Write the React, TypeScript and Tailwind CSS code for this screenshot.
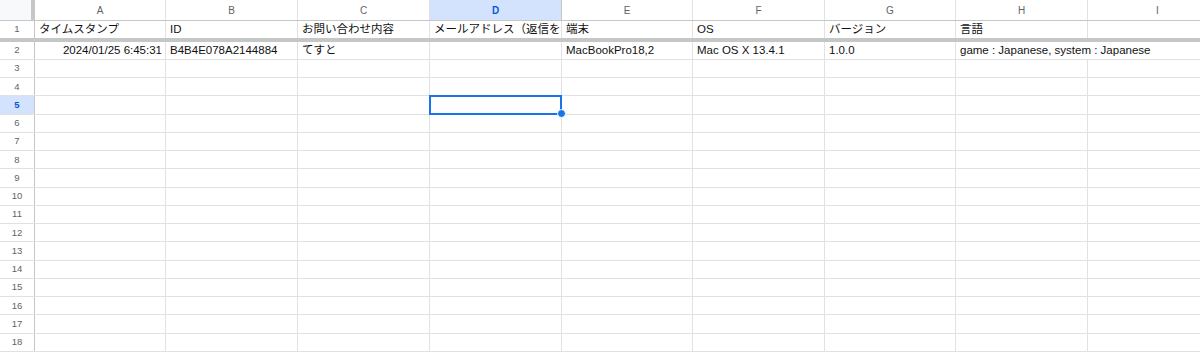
const columns = [
  { key: "A", width: 131 },
  { key: "B", width: 132 },
  { key: "C", width: 132 },
  { key: "D", width: 132 },
  { key: "E", width: 131 },
  { key: "F", width: 132 },
  { key: "G", width: 131 },
  { key: "H", width: 132 },
  { key: "I", width: 140 },
]

const headerRow: Record<string, string> = {
  A: "タイムスタンプ",
  B: "ID",
  C: "お問い合わせ内容",
  D: "メールアドレス（返信を希望される場合）",
  E: "端末",
  F: "OS",
  G: "バージョン",
  H: "言語",
}

const dataRow: Record<string, string> = {
  A: "2024/01/25 6:45:31",
  B: "B4B4E078A2144884",
  C: "てすと",
  E: "MacBookPro18,2",
  F: "Mac OS X 13.4.1",
  G: "1.0.0",
  H: "game : Japanese, system : Japanese",
}

const emptyRows = Array.from({ length: 16 }, (_, i) => i + 3)

const App = () => {
  return (
    <div
      className="w-[1200px] h-[354px] overflow-hidden bg-white text-[#111]"
      style={{ fontFamily: '"Liberation Sans", "Noto Sans CJK JP", Arial, sans-serif' }}
    >
      {/* column letters */}
      <div className="flex h-[21px] border-b border-[#c4c7c5]">
        <div className="flex w-[35px] shrink-0 bg-[#f8f9fa]">
          <div className="w-[31px]" />
          <div className="w-[4px] bg-[#c4c7c5]" />
        </div>
        {columns.map((col) => (
          <div
            key={col.key}
            style={{ width: col.width }}
            className={
              col.key === "D"
                ? "shrink-0 flex items-center justify-center border-r border-[#c4c7c5] bg-[#d3e3fd] text-[10px] font-bold text-[#0b57d0]"
                : "shrink-0 flex items-center justify-center border-r border-[#e1e1e1] text-[10px] text-[#5f6368]"
            }
          >
            {col.key}
          </div>
        ))}
      </div>

      {/* row 1 */}
      <div className="flex h-[16.5px]">
        <div className="w-[35px] shrink-0 flex items-center justify-center border-r border-[#c4c7c5] text-[9.5px] text-[#5f6368]">
          1
        </div>
        {columns.map((col) => (
          <div
            key={col.key}
            style={{ width: col.width }}
            className="shrink-0 flex items-center overflow-hidden whitespace-nowrap border-r border-[#e1e1e1] pl-[4px] pr-[1px] text-[11.5px]"
          >
            {headerRow[col.key]}
          </div>
        ))}
      </div>
      <div className="h-[4px] bg-[#c4c7c5]" />

      {/* row 2 */}
      <div className="flex h-[18.26px] border-b border-[#e1e1e1]">
        <div className="w-[35px] shrink-0 flex items-center justify-center border-r border-[#c4c7c5] text-[9.5px] text-[#5f6368]">
          2
        </div>
        {columns.map((col) => (
          <div
            key={col.key}
            style={{ width: col.width }}
            className={
              col.key === "H"
                ? "shrink-0 relative z-10 flex items-center whitespace-nowrap px-[4px] text-[11.5px]"
                : col.key === "A"
                  ? "shrink-0 flex items-center justify-end overflow-hidden whitespace-nowrap border-r border-[#e1e1e1] px-[3px] text-[11.5px]"
                  : "shrink-0 flex items-center overflow-hidden whitespace-nowrap border-r border-[#e1e1e1] px-[4px] text-[11.5px]"
            }
          >
            {dataRow[col.key]}
          </div>
        ))}
      </div>

      {emptyRows.map((row) => (
        <div key={row} className="flex h-[18.26px] border-b border-[#e1e1e1]">
          <div
            className={
              row === 5
                ? "w-[35px] shrink-0 flex items-center justify-center border-r border-[#c4c7c5] bg-[#d3e3fd] text-[9.5px] font-bold text-[#0b57d0]"
                : "w-[35px] shrink-0 flex items-center justify-center border-r border-[#c4c7c5] text-[9.5px] text-[#5f6368]"
            }
          >
            {row}
          </div>
          {columns.map((col) => (
            <div
              key={col.key}
              style={{ width: col.width }}
              className="shrink-0 relative border-r border-[#e1e1e1]"
            >
              {row === 5 && col.key === "D" && (
                <div className="absolute -top-[1px] -left-[1px] -right-[1px] -bottom-[1px] z-20 border-2 border-[#1a73e8]">
                  <div className="absolute -right-[5.5px] -bottom-[5.5px] h-[9px] w-[9px] rounded-full border border-white bg-[#1a73e8]" />
                </div>
              )}
            </div>
          ))}
        </div>
      ))}
    </div>
  )
}

export default App
